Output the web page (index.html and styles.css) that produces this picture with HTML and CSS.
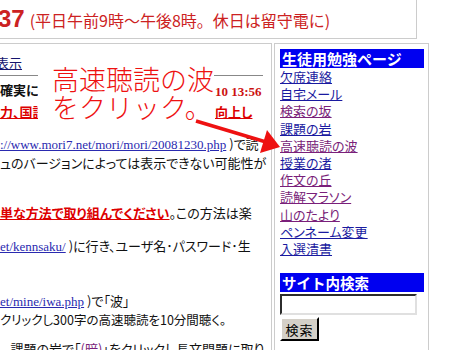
FILE: index.html
```html
<!DOCTYPE html>
<html lang="ja">
<head>
    <meta charset="utf-8">
    <title>生徒用勉強ページ</title>
    <link rel="stylesheet" href="styles.css">
</head>
<body>
<div class="page">
    <div class="top">
        <span class="tel-num">37</span>
        <span class="tel-note">(平日午前9時～午後8時。休日は留守電に)</span>
    </div>

    <div class="main">
        <div class="content">
            <div class="crumb"><a href="#">表示</a></div>
            <div class="rule"></div>
            <div class="news">
                <div class="news-row">
                    <b class="lead">確実に実力がつく</b>
                    <span class="stamp">10 13:56</span>
                </div>
                <div class="news-row">
                    <a href="#" class="hot">力、国語力が</a>
                    <a href="#" class="hot">向上し</a>
                </div>
            </div>
            <p class="p1"><a href="#" class="url">://www.mori7.net/mori/mori/20081230.php</a> )で読<br>ュのバージョンによっては表示できない可能性が</p>
            <p class="p2"><a href="#" class="hot">単な方法で取り組んでください</a>。この方法は楽</p>
            <p class="p3"><a href="#" class="url">et/kennsaku/</a> )に行き、ユーザ名･パスワード･生</p>
            <p class="p4"><a href="#" class="url">et/mine/iwa.php</a> )で「波」<br><span class="step">クリックし300字の高速聴読を10分間聴く。</span></p>
            <p class="p5">、課題の岩で「<a href="#" class="seen">(暗)</a>」をクリックし長文問題に取り</p>
        </div>

        <div class="side">
            <div class="side-head">生徒用勉強ページ</div>
            <nav class="side-links">
                <a href="#">欠席連絡</a>
                <a href="#">自宅メール</a>
                <a href="#" class="seen">検索の坂</a>
                <a href="#">課題の岩</a>
                <a href="#" class="seen">高速聴読の波</a>
                <a href="#">授業の渚</a>
                <a href="#" class="seen">作文の丘</a>
                <a href="#" class="seen">読解マラソン</a>
                <a href="#" class="seen">山のたより</a>
                <a href="#">ペンネーム変更</a>
                <a href="#">入選清書</a>
            </nav>
            <div class="side-head search-head">サイト内検索</div>
            <form class="search">
                <input type="text" class="search-box">
                <button type="button" class="search-btn">検索</button>
            </form>
        </div>
    </div>

    <!-- annotation drawn over the screenshot -->
    <div class="callout">高速聴読の波<br>をクリック。</div>
    <svg class="arrow" viewBox="0 0 450 350" width="450" height="350">
        <line x1="196" y1="121" x2="266" y2="142" stroke="#ee1111" stroke-width="3.5" />
        <polygon points="280,147 267,130 260,153" fill="#ee1111" />
    </svg>
</div>
</body>
</html>
```

FILE: styles.css
```css
html, body {
    margin: 0;
    padding: 0;
    background: #fff;
}
body {
    font-family: "Noto Sans CJK JP", "Noto Sans", sans-serif;
    font-size: 13px;
    color: #111;
    font-feature-settings: "palt";
}
a {
    color: #1a1aa0;
}
a.seen {
    color: #7a1f7a;
}
.page {
    position: relative;
    width: 450px;
    height: 350px;
    overflow: hidden;
}

/* header box */
.top {
    box-sizing: border-box;
    width: 417px;
    height: 39px;
    border-right: 1px solid #ccc;
    border-bottom: 1px solid #ccc;
    display: flex;
    align-items: center;
    white-space: nowrap;
    color: #cc2222;
}
.tel-num {
    margin-left: -2px;
    font-family: "Liberation Sans", Arial, sans-serif;
    font-size: 24px;
    font-weight: bold;
}
.tel-note {
    margin-left: 5px;
    font-size: 16px;
    padding-top: 2px;
    font-feature-settings: normal;
}

/* two columns */
.main {
    display: flex;
    gap: 2px;
    margin-top: 4px;
}
.content {
    box-sizing: border-box;
    width: 272px;
    height: 320px;
    border-top: 1px solid #ccc;
    border-right: 1px solid #ccc;
    white-space: nowrap;
    overflow: hidden;
}
.crumb {
    padding-top: 10px;
    line-height: 17px;
}
.crumb a {
    color: #14146e;
    margin-left: -4px;
}
.rule {
    width: 263px;
    height: 1px;
    margin-top: 4px;
    background: #888;
}
.news {
    margin-top: 4px;
}
.news-row {
    display: grid;
    grid-template-columns: 215px auto;
    line-height: 20px;
}
.news-row > :first-child {
    overflow: hidden;
}
.lead {
    font-weight: bold;
}
.stamp {
    font-family: "Liberation Serif", "Times New Roman", serif;
    font-weight: bold;
    font-size: 13px;
    color: #cc1111;
    padding-top: 2px;
}
a.hot {
    color: #dd0000;
    font-weight: bold;
}
a.url {
    font-family: "Liberation Serif", "Times New Roman", serif;
    color: #2a2ab0;
}
.step {
    font-size: 12.5px;
}
.content p {
    margin: 0;
    line-height: 17.5px;
}
.p1 { margin-top: 13px !important; }
.p2 { margin-top: 33px !important; }
.p3 { margin-top: 15px !important; }
.p4 { margin-top: 37px !important; }
.p5 { margin-top: 12px !important; padding-left: 4px; }

/* right column */
.side {
    box-sizing: border-box;
    width: 155px;
    height: 320px;
    border: 1px solid #ccc;
    border-bottom: none;
    padding: 5px 4px 0 5px;
}
.side-head {
    height: 19px;
    line-height: 19px;
    background: #0000f0;
    color: #fff;
    font-weight: bold;
    font-size: 15px;
    padding-left: 2px;
    font-feature-settings: normal;
}
.side-links a {
    display: block;
    line-height: 17.2px;
    font-size: 13px;
}
.search-head {
    margin-top: 16px;
    font-size: 14.5px;
}
.search {
    margin: 2px 0 0;
}
.search-box {
    display: block;
    box-sizing: border-box;
    width: 137px;
    height: 21px;
    margin: 0;
    border: 2px inset #999;
    border-color: #808080 #e0e0e0 #e0e0e0 #808080;
}
.search-btn {
    display: block;
    box-sizing: border-box;
    width: 39px;
    height: 24px;
    margin-top: 2px;
    padding: 0;
    font-family: "Noto Sans CJK JP", sans-serif;
    font-size: 13px;
    letter-spacing: 1px;
    background: #d4d0c8;
    border: 2px outset #eee;
    border-color: #fff #404040 #404040 #fff;
    color: #000;
}

/* annotation */
.callout {
    position: absolute;
    left: 38px;
    top: 64px;
    width: 176px;
    height: 62px;
    box-sizing: border-box;
    padding: 1px 0 0 14px;
    background: #fff;
    color: #ee1111;
    font-size: 27px;
    font-weight: 300;
    line-height: 28px;
    white-space: nowrap;
    font-feature-settings: normal;
}
.arrow {
    position: absolute;
    left: 0;
    top: 0;
    pointer-events: none;
}
```
